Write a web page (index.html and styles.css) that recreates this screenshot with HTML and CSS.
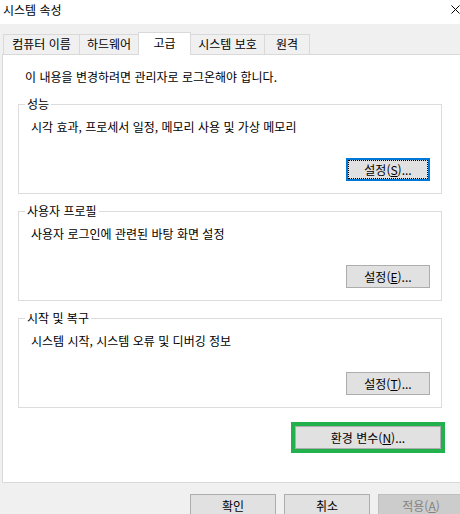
FILE: index.html
```html
<!DOCTYPE html>
<html lang="ko">
<head>
<meta charset="utf-8">
<title>시스템 속성</title>
<link rel="stylesheet" href="styles.css">
</head>
<body>
<div class="window">
  <div class="titlebar">
    <span class="title">시스템 속성</span>
    <svg class="close" width="9" height="9" viewBox="0 0 9 9"><path d="M0.5 0.5 L8.5 8.5 M8.5 0.5 L0.5 8.5" stroke="#000" stroke-width="1" fill="none"/></svg>
  </div>
  <div class="tabs">
    <div class="tab t1">컴퓨터 이름</div>
    <div class="tab t2">하드웨어</div>
    <div class="tab t3 active">고급</div>
    <div class="tab t4">시스템 보호</div>
    <div class="tab t5">원격</div>
  </div>
  <div class="panel">
    <p class="note">이 내용을 변경하려면 관리자로 로그온해야 합니다.</p>
    <fieldset class="group first">
      <legend>성능</legend>
      <p class="desc">시각 효과, 프로세서 일정, 메모리 사용 및 가상 메모리</p>
      <div class="actions"><button class="btn focus">설정(<u>S</u>)...</button></div>
    </fieldset>
    <fieldset class="group">
      <legend>사용자 프로필</legend>
      <p class="desc">사용자 로그인에 관련된 바탕 화면 설정</p>
      <div class="actions"><button class="btn">설정(<u>E</u>)...</button></div>
    </fieldset>
    <fieldset class="group">
      <legend>시작 및 복구</legend>
      <p class="desc">시스템 시작, 시스템 오류 및 디버깅 정보</p>
      <div class="actions"><button class="btn">설정(<u>T</u>)...</button></div>
    </fieldset>
    <div class="env-row"><button class="btn env">환경 변수(<u>N</u>)...</button></div>
  </div>
  <div class="footer">
    <button class="btn dlg">확인</button>
    <button class="btn dlg">취소</button>
    <button class="btn dlg disabled">적용(<u>A</u>)</button>
  </div>
</div>
</body>
</html>
```

FILE: styles.css
```css
html, body {
  margin: 0;
  padding: 0;
}
body {
  width: 460px;
  height: 514px;
  overflow: hidden;
  background: #f0f0f0;
  font-family: "Noto Sans CJK KR", "Noto Sans", sans-serif;
  font-size: 12px;
  color: #000;
}
.window {
  width: 460px;
  height: 514px;
  overflow: hidden;
  background: #f0f0f0;
}
.titlebar {
  height: 24px;
  background: #fff;
  display: flex;
  justify-content: space-between;
  align-items: flex-start;
  padding: 0 0 0 3px;
  box-sizing: border-box;
}
.title {
  line-height: 19px;
}
.close {
  margin-top: 5px;
}
.tabs {
  display: flex;
  align-items: flex-end;
  height: 20px;
  margin: 10px 0 0 3px;
  position: relative;
  z-index: 1;
}
.tab {
  box-sizing: border-box;
  height: 20px;
  border: 1px solid #d9d9d9;
  border-bottom: none;
  background: #f0f0f0;
  line-height: 18px;
  text-align: center;
  margin-left: -1px;
}
.t1 { width: 77px; margin-left: 0; }
.t2 { width: 60px; }
.t3 { width: 53px; }
.t4 { width: 75px; }
.t5 { width: 46px; }
.tab.active {
  height: 23px;
  margin-bottom: -1px;
  background: #fff;
  line-height: 20px;
  position: relative;
}
.panel {
  margin-left: 2px;
  width: 480px;
  height: 429px;
  box-sizing: border-box;
  border: 1px solid #d9d9d9;
  background: #fff;
}
.note {
  margin: 14px 0 0 22px;
  line-height: 16px;
}
.group {
  margin: 9px 0 0 15px;
  width: 424px;
  box-sizing: border-box;
  border: 1px solid #dcdcdc;
  padding: 0 11px 12px 0;
  min-width: 0;
}
.group.first {
  margin-top: 11px;
}
.group legend {
  margin-left: 6px;
  padding: 0 2px;
  line-height: 16px;
}
.desc {
  margin: 7px 0 0 12px;
  line-height: 16px;
}
.actions {
  display: flex;
  justify-content: flex-end;
  margin-top: 23px;
}
.btn {
  font-family: inherit;
  font-size: 12px;
  color: #000;
  background: #e1e1e1;
  border: 1px solid #adadad;
  border-radius: 0;
  height: 23px;
  width: 84px;
  padding: 0;
  margin: 0;
  box-sizing: border-box;
  line-height: 20px;
}
.btn.focus {
  border: 2px solid #0078d7;
  outline: 1px dotted #000;
  outline-offset: -3px;
}
.env-row {
  display: flex;
  justify-content: flex-end;
  width: 423px;
  margin: 18px 0 0 15px;
}
.btn.env {
  width: 146px;
  outline: 4px solid #22b14c;
}
.footer {
  display: flex;
  gap: 8px;
  padding: 11px 0 0 190px;
}
.btn.dlg {
  width: 86px;
  flex: none;
}
.btn.disabled {
  background: #cccccc;
  border-color: #bfbfbf;
  color: #838383;
}
```
